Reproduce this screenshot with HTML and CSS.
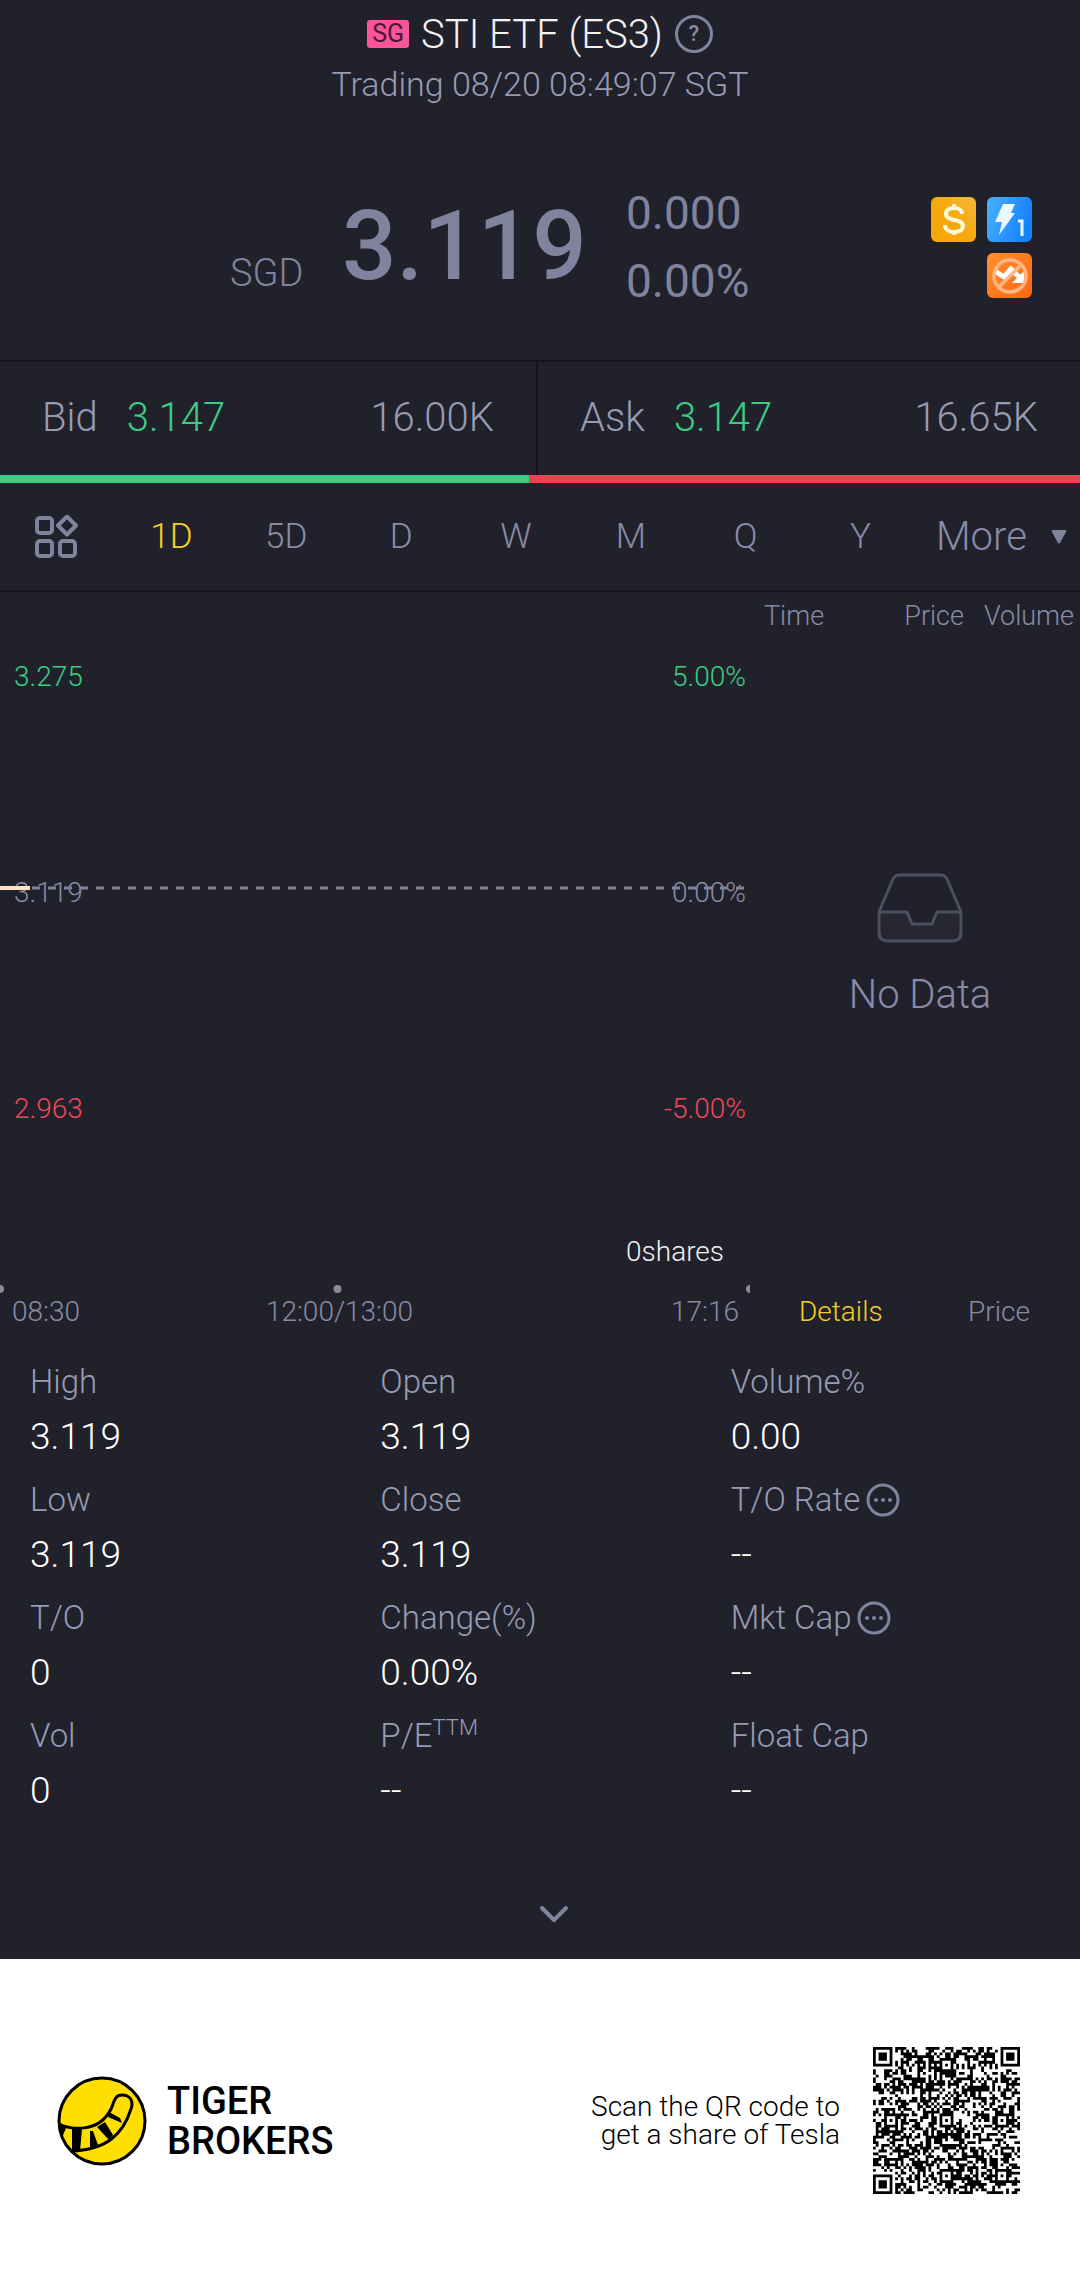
FILE: index.html
```html
<!DOCTYPE html>
<html lang="en">
<head>
  <meta charset="UTF-8">
  <meta name="viewport" content="width=device-width, initial-scale=1.0">
  <title>STI ETF (ES3)</title>
  <link rel="stylesheet" href="styles.css">
</head>
<body>

<header class="top">
  <div class="title-row">
    <span class="market">SG</span>
    <h1>STI ETF (ES3)</h1>
    <button class="help" type="button" aria-label="Help">?</button>
  </div>
  <p class="status">Trading 08/20 08:49:07 SGT</p>
</header>

<section class="quote">
  <span class="currency">SGD</span>
  <span class="price">3.119</span>
  <div class="change">
    <span>0.000</span>
    <span>0.00%</span>
  </div>
  <div class="badges">
    <svg viewBox="0 0 45 45" role="img" aria-label="Dividend">
      <defs>
        <linearGradient id="gold" x1="1" y1="0" x2="0" y2="1"><stop offset="0" stop-color="#f6b93a"/><stop offset="0.5" stop-color="#f6a90c"/><stop offset="1" stop-color="#f9a602"/></linearGradient>
      </defs>
      <rect width="45" height="45" rx="6" fill="url(#gold)"/>
      <path d="M31 17c0-4-3.500-6-8-6s-8 2-8 6c0 8 17 4 17 12 0 4-4 6-9 6s-9-2.500-9-7M23 7v4M23 34v4" fill="none" stroke="#fff8d8" stroke-width="4"/>
    </svg>
    <svg viewBox="0 0 45 45" role="img" aria-label="Level 1 quotes">
      <defs>
        <linearGradient id="blue" x1="0" y1="0" x2="1" y2="0.300"><stop offset="0" stop-color="#4bb0ff"/><stop offset="1" stop-color="#1583ff"/></linearGradient>
      </defs>
      <rect width="45" height="45" rx="6" fill="url(#blue)"/>
      <path d="M16 7h12l-4 9h4L12 38l3-13H8z" fill="#eaf7ff"/>
      <path d="M31 24h4v15" fill="none" stroke="#eaf7ff" stroke-width="3"/>
    </svg>
    <svg class="badge-last" viewBox="0 0 45 45" role="img" aria-label="No short selling">
      <defs>
        <linearGradient id="orange" x1="0" y1="0" x2="1" y2="1"><stop offset="0" stop-color="#ff9030"/><stop offset="1" stop-color="#ff6412"/></linearGradient>
      </defs>
      <rect width="45" height="45" rx="6" fill="url(#orange)"/>
      <path d="M8 18l9 6 7-8 9 9" fill="none" stroke="#fff" stroke-width="5"/>
      <path d="M37 18v12H25z" fill="#fff"/>
      <g fill="none" stroke="#ffb783" stroke-width="3.500"><circle cx="23" cy="23" r="16"/><path d="M12 34l22-22"/></g>
    </svg>
  </div>
</section>

<section class="book">
  <div class="side">
    <span>Bid</span>
    <span class="up">3.147</span>
    <span class="size">16.00K</span>
  </div>
  <div class="side">
    <span>Ask</span>
    <span class="up">3.147</span>
    <span class="size">16.65K</span>
  </div>
</section>
<div class="ratio"><div class="ratio-bid" style="width: 49%"></div></div>

<nav class="periods">
  <button class="layout-btn" type="button" aria-label="Chart layout">
    <svg viewBox="0 0 44 44" fill="none" stroke="#80839d" stroke-width="4">
      <rect x="3" y="3" width="15" height="15" rx="3"/>
      <path d="M33 1.500l9 9-9 9-9-9z" stroke-linejoin="round"/>
      <rect x="3" y="26" width="15" height="15" rx="3"/>
      <rect x="26" y="26" width="15" height="15" rx="3"/>
    </svg>
  </button>
  <div class="tabs">
    <button class="active" type="button">1D</button>
    <button type="button">5D</button>
    <button type="button">D</button>
    <button type="button">W</button>
    <button type="button">M</button>
    <button type="button">Q</button>
    <button type="button">Y</button>
  </div>
  <div class="more">
    <select aria-label="More periods">
      <option>More</option>
    </select>
    <svg viewBox="0 0 16 14"><path d="M2 0h12q2 0 1 2L9 13q-1 1-2 0L1 2Q0 0 2 0z" fill="#80839d"/></svg>
  </div>
</nav>

<main class="market-data">
  <section class="chart">
    <div class="level up"><span>3.275</span><span>5.00%</span></div>
    <div class="level middle">
      <span>3.119</span><span>0.00%</span>
      <svg class="baseline">
        <line x1="0" y1="2" x2="100%" y2="2" stroke="#80839d" stroke-width="3" stroke-dasharray="8 8"/>
        <line x1="0" y1="2" x2="4%" y2="2" stroke="#fbe3c4" stroke-width="4"/>
      </svg>
    </div>
    <div class="level down"><span>2.963</span><span>-5.00%</span></div>
    <div class="shares"><span>0shares</span></div>
    <svg class="ticks">
      <g fill="#8c8c8c"><circle cx="0" cy="4" r="4"/><circle cx="45%" cy="4" r="4"/><circle cx="100%" cy="4" r="4"/></g>
    </svg>
    <div class="times"><span>08:30</span><span>12:00/13:00</span><span>17:16</span></div>
  </section>

  <section class="trades">
    <table>
      <thead>
        <tr><th class="time">Time</th><th>Price</th><th>Volume</th></tr>
      </thead>
      <tbody>
        <tr>
          <td colspan="3">
            <svg class="inbox" viewBox="0 0 86 70" stroke="#4c4e61" stroke-width="3" stroke-linejoin="round">
              <path d="M2 39h28l5 12h20l5-12h24v20q0 9-9 9H11q-9 0-9-9z" fill="#272731"/>
              <path d="M2 39L16 6q2-4 6-4h42q4 0 6 4l14 33" fill="none"/>
            </svg>
            No Data
          </td>
        </tr>
      </tbody>
    </table>
    <div class="trade-tabs">
      <button class="active" type="button">Details</button>
      <button type="button">Price</button>
    </div>
  </section>
</main>

<dl class="stats">
  <div><dt>High</dt><dd>3.119</dd></div>
  <div><dt>Open</dt><dd>3.119</dd></div>
  <div><dt>Volume%</dt><dd>0.00</dd></div>
  <div><dt>Low</dt><dd>3.119</dd></div>
  <div><dt>Close</dt><dd>3.119</dd></div>
  <div>
    <dt>T/O Rate
      <svg class="info" viewBox="0 0 34 34"><circle cx="17" cy="17" r="15" fill="none" stroke="#80839d" stroke-width="3"/><g fill="#80839d"><circle cx="10" cy="17" r="2"/><circle cx="17" cy="17" r="2"/><circle cx="24" cy="17" r="2"/></g></svg>
    </dt>
    <dd>--</dd>
  </div>
  <div><dt>T/O</dt><dd>0</dd></div>
  <div><dt>Change(%)</dt><dd>0.00%</dd></div>
  <div>
    <dt>Mkt Cap
      <svg class="info" viewBox="0 0 34 34"><circle cx="17" cy="17" r="15" fill="none" stroke="#80839d" stroke-width="3"/><g fill="#80839d"><circle cx="10" cy="17" r="2"/><circle cx="17" cy="17" r="2"/><circle cx="24" cy="17" r="2"/></g></svg>
    </dt>
    <dd>--</dd>
  </div>
  <div><dt>Vol</dt><dd>0</dd></div>
  <div><dt><span>P/E<sup>TTM</sup></span></dt><dd>--</dd></div>
  <div><dt>Float Cap</dt><dd>--</dd></div>
</dl>

<button class="expand" type="button" aria-label="Show more">
  <svg viewBox="0 0 28 18"><path d="M2 3l12 12L26 3" fill="none" stroke="#80839d" stroke-width="4" stroke-linecap="round" stroke-linejoin="round"/></svg>
</button>

<footer>
  <svg class="logo" viewBox="0 0 90 90">
    <defs><clipPath id="disc"><circle cx="45" cy="45" r="43"/></clipPath></defs>
    <circle cx="45" cy="45" r="43" fill="#ffde00"/>
    <g clip-path="url(#disc)">
      <path d="M-2 46C14 55 42 57 54 33c3-6 3-14 11-14 8 0 12 6 9 14C66 58 50 74 14 75" fill="none" stroke="#000" stroke-width="3"/>
      <path d="M0 46l9 6-5 12zM15 51l10 2-2 22-8-1zM33 55l3 0 5 14-8 4zM40 51l8-5 8 13-4 5zM52 36l11 6 2 5-14-6z"/>
    </g>
    <circle cx="45" cy="45" r="43" fill="none" stroke="#000" stroke-width="3"/>
  </svg>
  <p class="brand">TIGER<br>BROKERS</p>
  <p class="scan">Scan the QR code to<br>get a share of Tesla</p>
  <svg class="qr" viewBox="0 0 53 53" role="img" aria-label="QR code"><path id="qrModules"/></svg>
</footer>

<script src="qr.js"></script>
</body>
</html>
```
FILE: styles.css
```css
* {
  box-sizing: border-box;
}
body {
  margin: 0;
  font-family: Roboto, "Liberation Sans", sans-serif;
  font-weight: 300;
  background-color: #21212b;
  color: #979bb4;
}
h1, p, dl, dd {
  margin: 0;
}
button, select {
  padding: 0;
  border: none;
  background: none;
  color: #888ba6;
  font: inherit;
  cursor: pointer;
}
svg {
  display: block;
  flex: none;
}
.up {
  color: #3bcd84;
}
.down {
  color: #f0475b;
}

.top {
  padding-top: 10px;
  text-align: center;
}
.title-row {
  display: flex;
  justify-content: center;
  align-items: center;
  gap: 12px;
  height: 48px;
}
.market {
  width: 42px;
  border-radius: 3px;
  background-color: #fb5599;
  color: #4c1638;
  font-size: 25px;
  font-weight: 400;
  line-height: 28px;
}
h1 {
  color: #f2f2f2;
  font-size: 40px;
  font-weight: 300;
}
.help {
  width: 38px;
  height: 38px;
  border: 3px solid #80839d;
  border-radius: 50%;
  font-size: 22px;
  font-weight: 500;
  line-height: 32px;
}
.status {
  padding-top: 6px;
  font-size: 34px;
  line-height: 40px;
}

.quote {
  display: flex;
  align-items: flex-start;
  height: 256px;
  padding: 84px 48px 0 230px;
  color: #80839d;
}
.currency {
  width: 112px;
  padding-top: 65px;
  font-size: 38px;
  line-height: 40px;
}
.price {
  width: 284px;
  font-size: 96px;
  font-weight: 500;
  line-height: 116px;
}
.change {
  display: flex;
  flex-direction: column;
  gap: 18px;
  font-size: 46px;
  font-weight: 400;
  line-height: 50px;
}
.badges {
  display: grid;
  grid-template-columns: 45px 45px;
  gap: 11px;
  margin-left: auto;
  padding-top: 9px;
}
.badges svg {
  width: 45px;
  height: 45px;
}
.badge-last {
  grid-column: 2;
}

.book {
  display: grid;
  grid-template-columns: 536fr 544fr;
  border-top: 2px solid #14141c;
}
.side {
  display: flex;
  gap: 29px;
  padding: 32px 42px 33px;
  font-size: 40px;
  line-height: 48px;
}
.side:last-child {
  border-left: 2px solid #14141c;
}
.size {
  margin-left: auto;
}
.ratio {
  height: 8px;
  background-color: #f93d50;
}
.ratio-bid {
  height: 8px;
  background-color: #3bcd84;
}

.periods {
  display: flex;
  align-items: center;
  height: 109px;
  padding: 0 13px 0 34px;
  border-bottom: 2px solid #14141c;
}
.layout-btn svg {
  width: 44px;
  height: 44px;
}
.tabs {
  display: flex;
  flex: 1;
  margin: 0 18px 0 36px;
}
.tabs button {
  flex: 1;
  font-size: 35px;
  line-height: 60px;
}
.periods .active, .trade-tabs .active {
  color: #f5cf25;
}
.more {
  display: flex;
  align-items: center;
  gap: 24px;
}
.more select {
  appearance: none;
  font-size: 40px;
  line-height: 60px;
}
.more svg {
  width: 16px;
  height: 14px;
}

.market-data {
  display: grid;
  grid-template-columns: 25fr 11fr;
  color: #888ba6;
  font-size: 28px;
  line-height: 32px;
}
.chart {
  padding-top: 69px;
}
.level {
  position: relative;
  display: flex;
  justify-content: space-between;
  height: 216px;
  padding: 0 4px 0 14px;
}
.level.down {
  height: 143px;
}
/* previous close line, drawn across the middle labels */
.baseline {
  position: absolute;
  top: 9px;
  left: 0;
  width: 100%;
  height: 4px;
}
.shares {
  padding-right: 26px;
  color: #f2f2f2;
  text-align: right;
}
.ticks {
  width: 100%;
  height: 8px;
  margin: 17px 0 3px;
}
.times {
  display: grid;
  grid-template-columns: 1fr 2fr 1fr;
  padding: 0 11px 0 12px;
}
.times span:nth-child(2) {
  padding-right: 72px;
  text-align: center;
}
.times span:last-child {
  text-align: right;
}
.trades {
  display: flex;
  flex-direction: column;
  justify-content: space-between;
}
.trades table {
  width: 100%;
  border-collapse: collapse;
}
.trades th {
  padding: 8px 6px 0 14px;
  font-size: 27px;
  font-weight: 300;
  text-align: right;
}
.trades .time {
  width: 50%;
  text-align: left;
}
.trades td {
  padding: 241px 0 0 10px;
  font-size: 40px;
  line-height: 48px;
  text-align: center;
}
.inbox {
  width: 86px;
  height: 70px;
  margin: 0 auto 28px;
}
.trade-tabs {
  display: flex;
  justify-content: space-between;
  padding: 0 50px 0 49px;
}

.stats {
  display: grid;
  grid-template-columns: 350fr 350fr 349fr;
  row-gap: 19px;
  padding: 34px 0 0 30px;
}
.stats dt {
  display: flex;
  align-items: center;
  gap: 6px;
  font-size: 33px;
  line-height: 40px;
}
.stats dd {
  padding-top: 11px;
  color: #fff;
  font-size: 37px;
  line-height: 48px;
}
.stats sup {
  font-size: 22px;
  line-height: 20px;
}
.info {
  width: 34px;
  height: 34px;
}
.expand {
  display: block;
  width: 100%;
  padding: 90px 0 36px 28px;
}
.expand svg {
  width: 28px;
  height: 18px;
  margin: 0 auto;
}

footer {
  display: flex;
  align-items: center;
  height: 323px;
  padding: 0 60px 0 57px;
  background-color: #fff;
  color: #000;
}
.logo {
  width: 90px;
  height: 90px;
}
.brand {
  padding-left: 20px;
  font-size: 38px;
  font-weight: 500;
  line-height: 40px;
}
.scan {
  margin-left: auto;
  padding-right: 33px;
  font-size: 28px;
  line-height: 28px;
  text-align: right;
}
.qr {
  width: 147px;
  height: 147px;
}
```
FILE: qr.js
```js
const SIZE = 53;
const grid = [];
let seed = 2023;

function nextBit() {
  seed = (seed * 1103515245 + 12345) % 2147483648;
  return seed / 2147483648 < 0.52;
}

for (let y = 0; y < SIZE; y++) {
  grid.push([]);
  for (let x = 0; x < SIZE; x++) {
    grid[y].push(nextBit());
  }
}

// timing lines
for (let i = 0; i < SIZE; i++) {
  grid[6][i] = grid[i][6] = i % 2 === 0;
}

// square rings around a centre; rings listed in "light" stay white
function rings(cx, cy, radius, light) {
  for (let y = cy - radius; y <= cy + radius; y++) {
    for (let x = cx - radius; x <= cx + radius; x++) {
      if (grid[y] && x >= 0 && x < SIZE) {
        const d = Math.max(Math.abs(x - cx), Math.abs(y - cy));
        grid[y][x] = !light.includes(d);
      }
    }
  }
}

[[26, 6], [6, 26], [26, 26], [46, 26], [26, 46], [46, 46]].forEach(([x, y]) => rings(x, y, 2, [1]));
[[3, 3], [49, 3], [3, 49]].forEach(([x, y]) => rings(x, y, 4, [2, 4]));

let d = "";
grid.forEach((row, y) => row.forEach((on, x) => {
  if (on) d += `M${x} ${y}h1v1h-1z`;
}));
document.getElementById("qrModules").setAttribute("d", d);
```
